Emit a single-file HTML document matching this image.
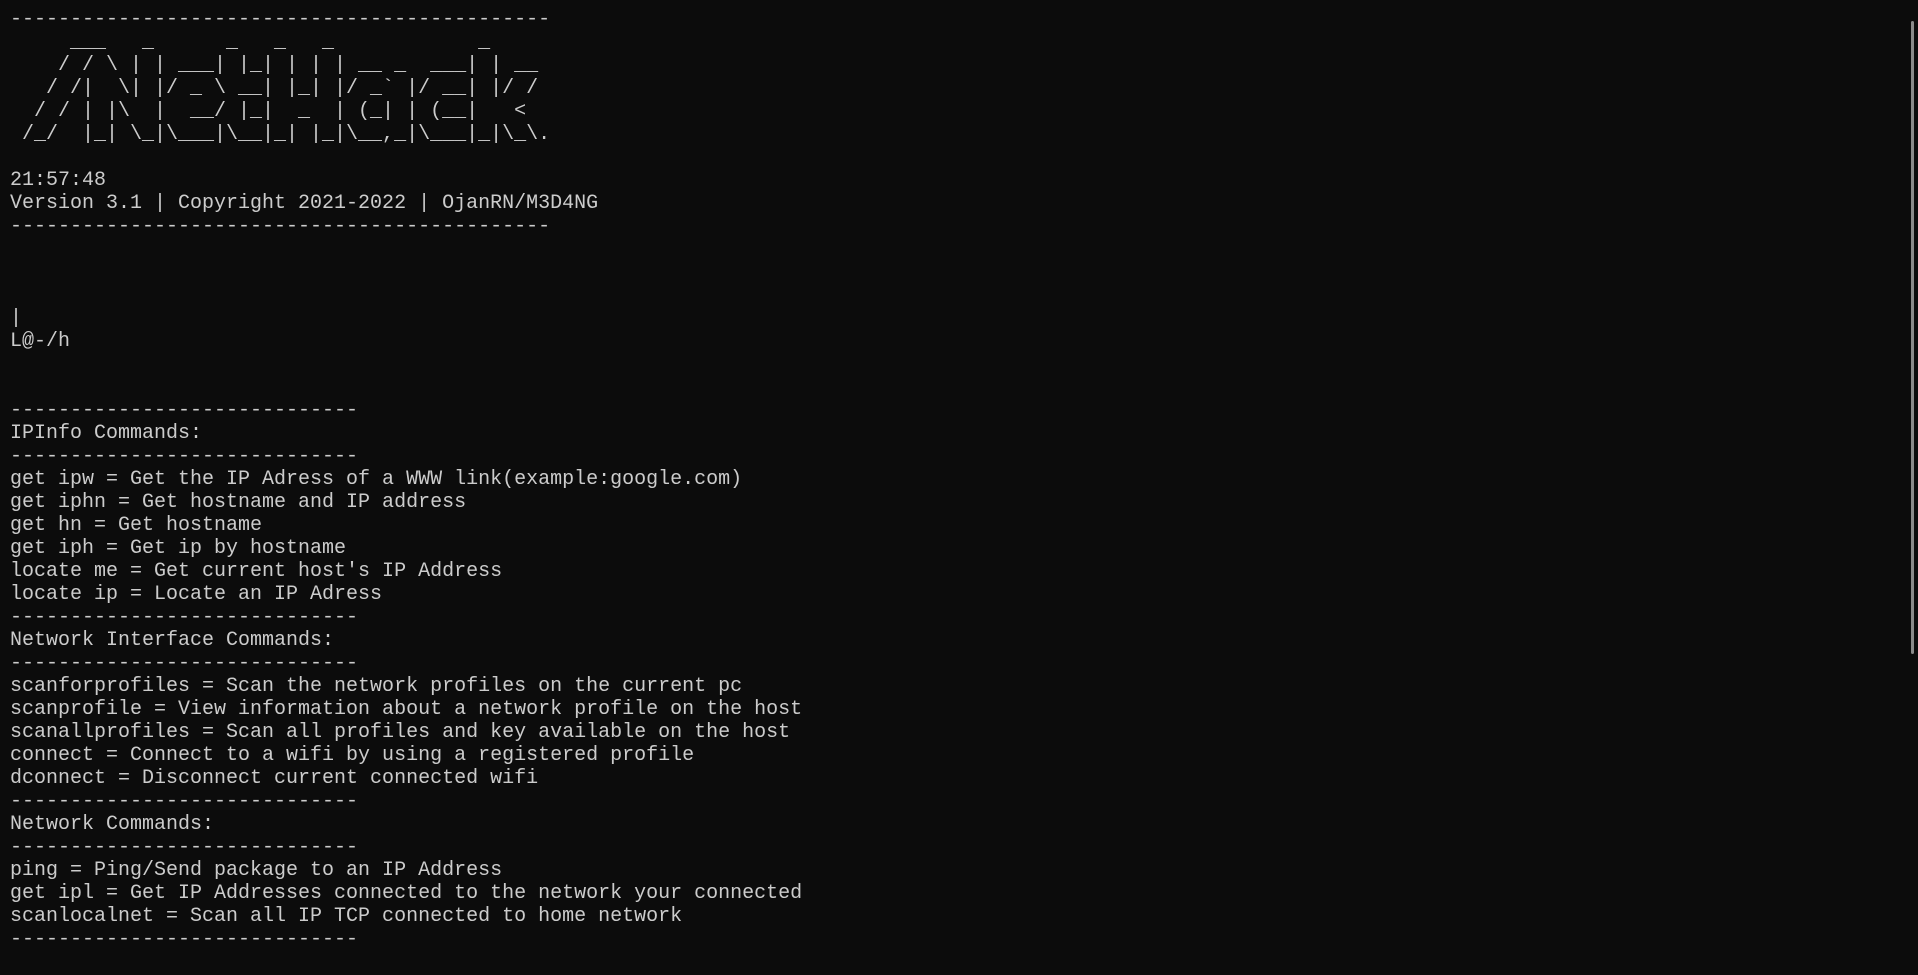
<!DOCTYPE html>
<html><head><meta charset="utf-8"><style>
html,body{margin:0;padding:0;background:#0c0c0c;width:1918px;height:975px;overflow:hidden}
pre{margin:0;position:absolute;left:10px;top:8px;font-family:"Liberation Mono",monospace;font-size:20px;line-height:23px;color:#cccccc;white-space:pre}
.sb{position:absolute;left:1911px;top:21px;width:3px;height:633px;background:#8a8a8a;border-radius:2px}
</style></head><body>
<pre>---------------------------------------------
     ___   _      _   _   _            _
    / / \ | | ___| |_| | | | __ _  ___| | __
   / /|  \| |/ _ \ __| |_| |/ _` |/ __| |/ /
  / / | |\  |  __/ |_|  _  | (_| | (__|   &lt;
 /_/  |_| \_|\___|\__|_| |_|\__,_|\___|_|\_\.

21:57:48
Version 3.1 | Copyright 2021-2022 | OjanRN/M3D4NG
---------------------------------------------



|
L@-/h


-----------------------------
IPInfo Commands:
-----------------------------
get ipw = Get the IP Adress of a WWW link(example:google.com)
get iphn = Get hostname and IP address
get hn = Get hostname
get iph = Get ip by hostname
locate me = Get current host's IP Address
locate ip = Locate an IP Adress
-----------------------------
Network Interface Commands:
-----------------------------
scanforprofiles = Scan the network profiles on the current pc
scanprofile = View information about a network profile on the host
scanallprofiles = Scan all profiles and key available on the host
connect = Connect to a wifi by using a registered profile
dconnect = Disconnect current connected wifi
-----------------------------
Network Commands:
-----------------------------
ping = Ping/Send package to an IP Address
get ipl = Get IP Addresses connected to the network your connected
scanlocalnet = Scan all IP TCP connected to home network
-----------------------------</pre>
<div class="sb"></div>
</body></html>
